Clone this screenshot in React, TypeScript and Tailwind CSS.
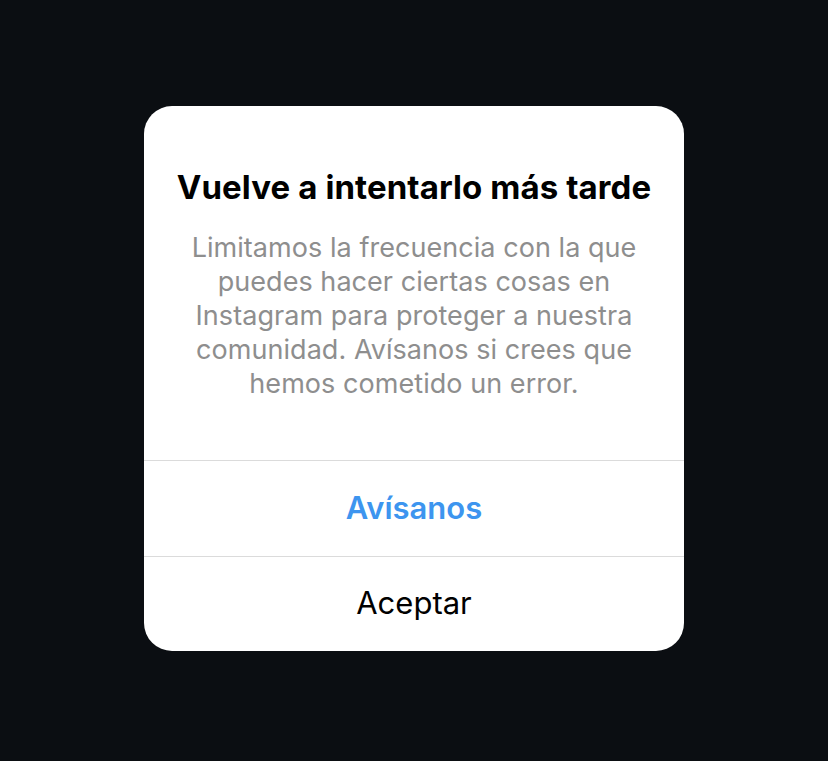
export default function App() {
  return (
    <div
      className="w-[828px] h-[761px] bg-[#0b0e12] flex items-center justify-center"
      style={{ fontFamily: "Inter, 'Liberation Sans', sans-serif" }}
    >
      <div className="w-[540px] bg-white rounded-[28px] overflow-hidden flex flex-col mt-[-5px]">
        <div className="px-6 pt-[63px] pb-[59px] flex flex-col items-center text-center">
          <h1 className="text-[33px] leading-[36px] font-bold text-black tracking-[0.1px]">
            Vuelve a intentarlo más tarde
          </h1>
          <p className="mt-[26px] text-[27px] leading-[34px] text-[#8e8e8e] px-4 tracking-[0.05px]">
            Limitamos la frecuencia con la que puedes hacer ciertas cosas en Instagram para proteger a nuestra
            comunidad. Avísanos si crees que hemos cometido un error.
          </p>
        </div>
        <button className="h-[96px] border-t border-[#dbdbdb] text-[31px] font-semibold text-[#3d95ef]">
          Avísanos
        </button>
        <button className="h-[95px] border-t border-[#dbdbdb] text-[31px] text-black">Aceptar</button>
      </div>
    </div>
  );
}
